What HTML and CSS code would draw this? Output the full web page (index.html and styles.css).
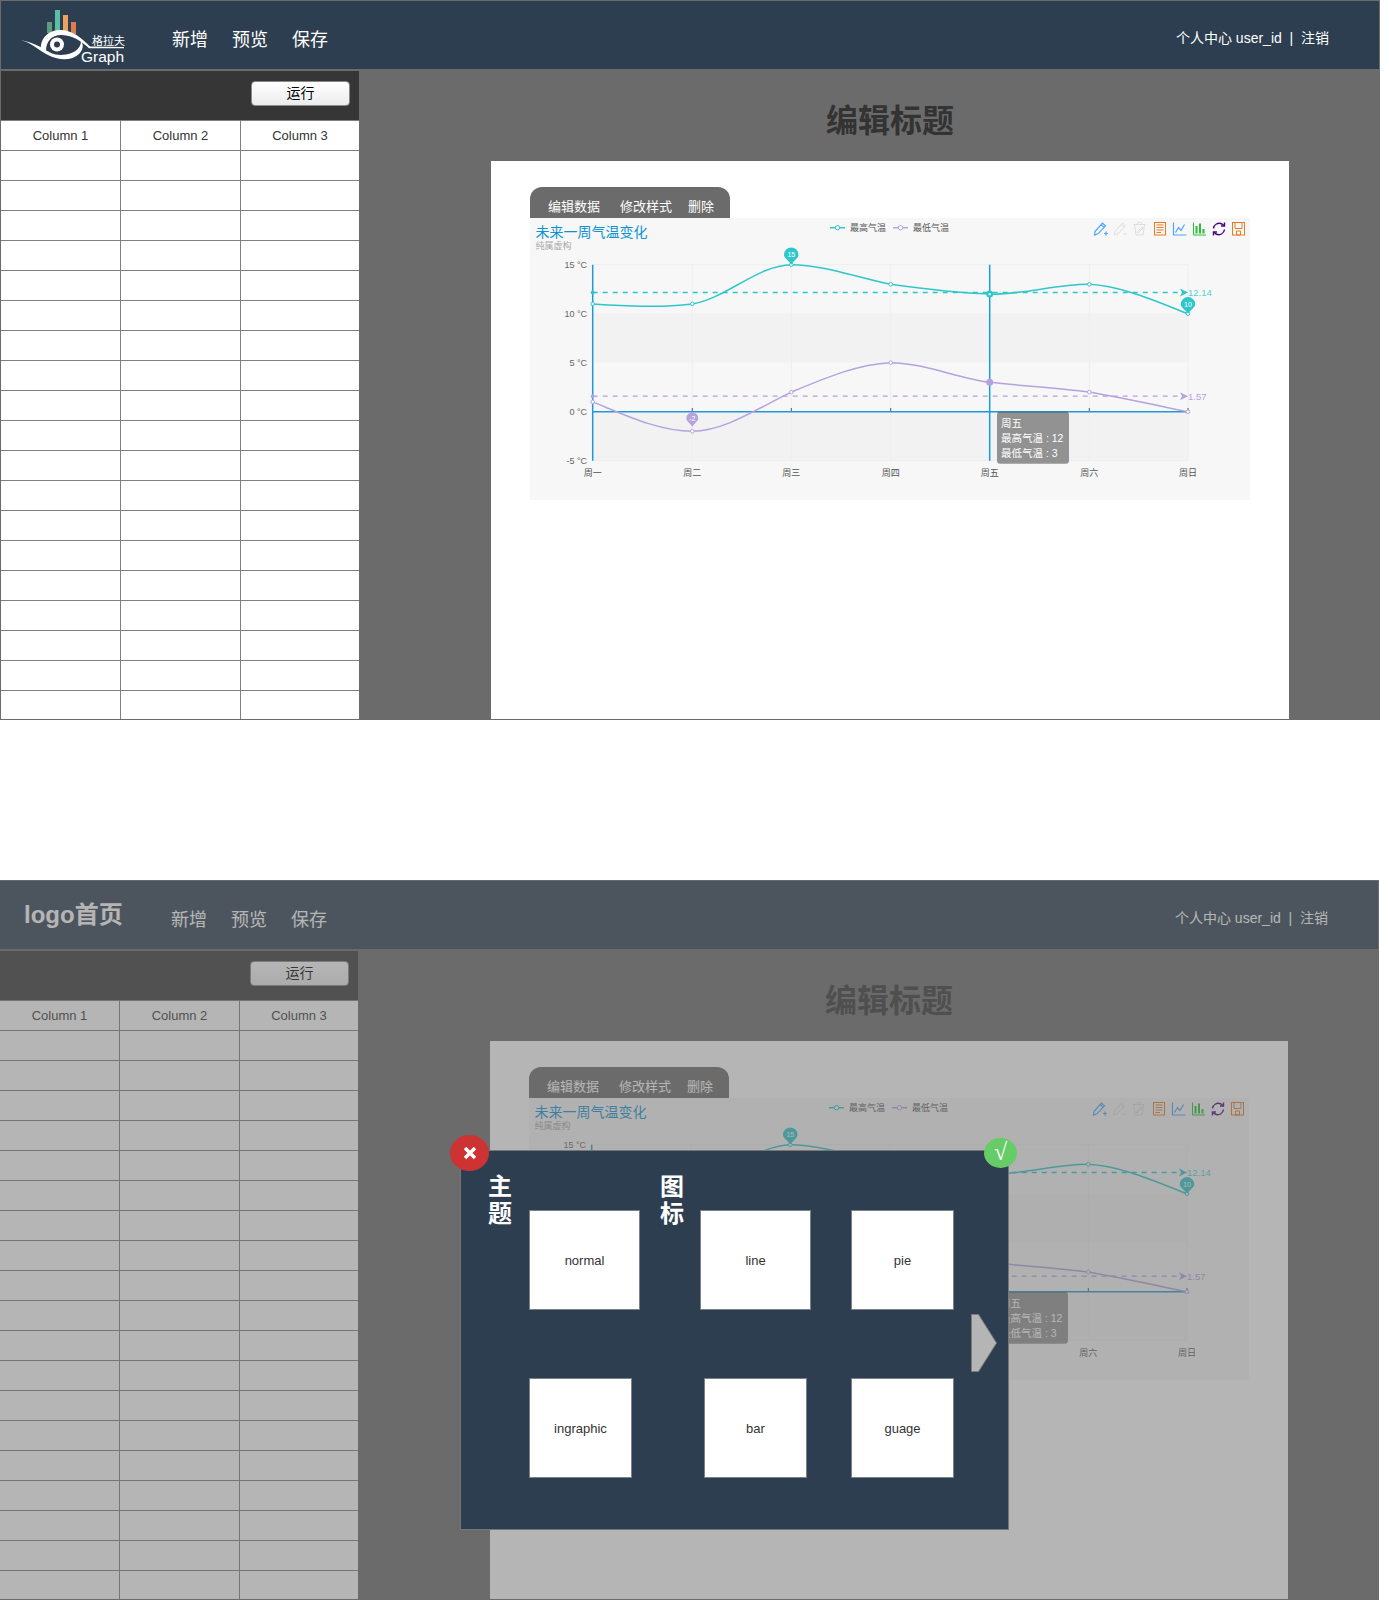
FILE: index.html
```html
<!DOCTYPE html>
<html lang="zh-CN">
<head>
  <meta charset="UTF-8">
  <meta name="viewport" content="width=device-width, initial-scale=1.0">
  <title>格拉夫 Graph</title>
  <link rel="stylesheet" href="styles.css">
</head>
<body>
  <!-- 编辑页 -->
  <section class="frame">
    <header class="nav">
      <div class="logo">
        <svg class="logo-img" viewBox="1 1 130 68">
          <rect class="bar-a" x="47" y="22" width="5" height="11"/>
          <rect class="bar-b" x="55" y="10" width="5" height="20"/>
          <rect class="bar-c" x="63" y="15" width="5" height="17"/>
          <rect class="bar-d" x="71" y="22" width="5" height="12"/>
          <path class="eye-fill" d="M21,40.5C30,41.5 38,50 48,55C58,60.5 72,61 79,54C83,50 84,45 81,41C81,47 76,53 66,54.5C56,56 50,53 44,49C36,44.5 28,41 21,40.5Z"/>
          <path class="eye-fill" d="M41,49C40,38 49,30 60,30C73,30 81,38 90,46.5L124,47L124,48.2L89,48.2C81,41 73,35.5 62,35C52,34.5 46,41 46,51Z"/>
          <circle class="eye-fill" cx="57" cy="44.5" r="7"/>
          <circle class="eye-dot" cx="57" cy="44.5" r="3"/>
          <text class="logo-cn" x="92" y="45">格拉夫</text>
          <text class="logo-en" x="81" y="62">Graph</text>
        </svg>
      </div>
      <nav class="nav-links">
        <a>新增</a>
        <a>预览</a>
        <a>保存</a>
      </nav>
      <div class="nav-user">个人中心 user_id &nbsp;|&nbsp; 注销</div>
    </header>
    <div class="layout">
      <aside class="side">
        <div class="side-bar"><button class="run-btn">运行</button></div>
        <table class="sheet">
          <tr><th>Column 1</th><th>Column 2</th><th>Column 3</th></tr>
          <tr><td></td><td></td><td></td></tr>
          <tr><td></td><td></td><td></td></tr>
          <tr><td></td><td></td><td></td></tr>
          <tr><td></td><td></td><td></td></tr>
          <tr><td></td><td></td><td></td></tr>
          <tr><td></td><td></td><td></td></tr>
          <tr><td></td><td></td><td></td></tr>
          <tr><td></td><td></td><td></td></tr>
          <tr><td></td><td></td><td></td></tr>
          <tr><td></td><td></td><td></td></tr>
          <tr><td></td><td></td><td></td></tr>
          <tr><td></td><td></td><td></td></tr>
          <tr><td></td><td></td><td></td></tr>
          <tr><td></td><td></td><td></td></tr>
          <tr><td></td><td></td><td></td></tr>
          <tr><td></td><td></td><td></td></tr>
          <tr><td></td><td></td><td></td></tr>
          <tr><td></td><td></td><td></td></tr>
          <tr><td></td><td></td><td></td></tr>
        </table>
      </aside>
      <main class="main">
        <h1 class="page-title">编辑标题</h1>
        <div class="card">
          <div class="tabs">
            <span class="tab">编辑数据</span>
            <span class="tab">修改样式</span>
            <span class="tab tab-last">删除</span>
          </div>
          <svg class="chart" viewBox="0 0 720 282">
            <rect class="band" x="62.7" y="95.3" width="595.3" height="49"/>
            <rect class="band" x="62.7" y="193.7" width="595.3" height="49"/>
            <path class="grid" d="M62.7,46.7H658M162.3,46.7V242.7M261.3,46.7V242.7M360.7,46.7V242.7M559.3,46.7V242.7M658,46.7V242.7M62.7,242.7H658"/>
            <text class="chart-title" x="5.5" y="18.5">未来一周气温变化</text>
            <text class="chart-sub" x="5.5" y="31">纯属虚构</text>
            <path class="line-high" d="M300,9.7h15"/><circle class="dot-high" cx="307.5" cy="9.7" r="2.2"/>
            <text class="legend" x="320" y="13">最高气温</text>
            <path class="line-low" d="M363,9.7h15"/><circle class="dot-low" cx="370.5" cy="9.7" r="2.2"/>
            <text class="legend" x="383" y="13">最低气温</text>
            <g class="ylabels">
              <text x="57" y="50">15 °C</text>
              <text x="57" y="99">10 °C</text>
              <text x="57" y="148">5 °C</text>
              <text x="57" y="197">0 °C</text>
              <text x="57" y="246">-5 °C</text>
            </g>
            <g class="xlabels">
              <text x="62.7" y="258">周一</text>
              <text x="162.3" y="258">周二</text>
              <text x="261.3" y="258">周三</text>
              <text x="360.7" y="258">周四</text>
              <text x="459.7" y="258">周五</text>
              <text x="559.3" y="258">周六</text>
              <text x="658" y="258">周日</text>
            </g>
            <path class="axis" d="M62.7,46.7V242.7M62.7,193.7H658M459.7,46.7V242.7"/>
            <path class="tick" d="M162.3,190V193M261.3,190V193M360.7,190V193M559.3,190V193M658,190V193"/>
            <path class="dash-high" d="M62.7,74.5H652"/>
            <path class="arrow-high" d="M650,70.5L658,74.5L650,78.5L652,74.5Z"/>
            <circle class="fill-high" cx="62.7" cy="74.5" r="2"/>
            <text class="mark-high" x="658" y="78">12.14</text>
            <path class="dash-low" d="M62.7,178.2H652"/>
            <path class="arrow-low" d="M650,174.2L658,178.2L650,182.2L652,178.2Z"/>
            <circle class="fill-low" cx="62.7" cy="178.2" r="2"/>
            <text class="mark-low" x="658" y="182">1.57</text>
            <path class="line-high" d="M62.7,85.9C95,88 130,90 162.3,85.9C195,81 228,47 261.3,46.7C295,47 328,60 360.7,66.3C394,71 427,75 459.7,76.1C493,77 526,66 559.3,66.3C592,68 625,83 658,95.7"/>
            <path class="line-low" d="M62.7,183.9C95,197 128,213 162.3,213.3C195,213 228,190 261.3,174.1C295,160 328,146 360.7,144.7C394,145 427,160 459.7,164.3C493,168 526,170 559.3,174.1C592,180 625,187 658,193.7"/>
            <g class="dots-high">
              <circle cx="62.7" cy="85.9" r="1.8"/><circle cx="162.3" cy="85.9" r="1.8"/><circle cx="261.3" cy="46.7" r="1.8"/><circle cx="360.7" cy="66.3" r="1.8"/><circle cx="559.3" cy="66.3" r="1.8"/><circle cx="658" cy="95.7" r="1.8"/>
            </g>
            <g class="dots-low">
              <circle cx="62.7" cy="183.9" r="1.8"/><circle cx="162.3" cy="213.3" r="1.8"/><circle cx="261.3" cy="174.1" r="1.8"/><circle cx="360.7" cy="144.7" r="1.8"/><circle cx="559.3" cy="174.1" r="1.8"/><circle cx="658" cy="193.7" r="1.8"/>
            </g>
            <circle class="fill-high" cx="459.7" cy="76.1" r="3.5"/><circle class="hole" cx="459.7" cy="76.1" r="1.2"/>
            <circle class="fill-low" cx="459.7" cy="164.3" r="3.5"/>
            <path class="fill-high" d="M254,36.7A7.2,7.2 0 1 1 268.5,36.7C268.5,40 264,42 261.3,46.7C258.5,42 254,40 254,36.7Z"/>
            <text class="pin-text" x="261.3" y="39">15</text>
            <path class="fill-high" d="M650.8,86.3A7.2,7.2 0 1 1 665.2,86.3C665.2,89.6 660.7,91.6 658,95.7C655.3,91.6 650.8,89.6 650.8,86.3Z"/>
            <text class="pin-text" x="658" y="88.6">10</text>
            <path class="fill-low" d="M156.3,200.3A6,6 0 1 1 168.3,200.3C168.3,203 164.5,205 162.3,209C160,205 156.3,203 156.3,200.3Z"/>
            <text class="pin-text" x="162.3" y="202.6">-2</text>
            <g class="tooltip">
              <rect class="tip-bg" x="467" y="193.7" width="72" height="52" rx="3"/>
              <text x="471" y="209">周五</text>
              <text x="471" y="224">最高气温 : 12</text>
              <text x="471" y="239">最低气温 : 3</text>
            </g>
            <g class="tool-blue" transform="translate(564,4)">
              <path d="M1,9.5L8.5,1.2L11.5,3.8L4,11.8L0.5,13ZM7.2,2.8L10.2,5.4"/><path d="M10,11.5h4M12,9.5v4"/>
            </g>
            <g class="tool-off" transform="translate(584,4)">
              <path d="M1,9.5L8.5,1.2L11.5,3.8L4,11.8L0.5,13ZM7.2,2.8L10.2,5.4"/><path d="M9,12h4"/>
            </g>
            <g class="tool-off" transform="translate(603,4)">
              <path d="M0.5,2.5H12.5M4,2.5L5,0.5H8L9,2.5M1.5,2.5L3,13H10L11.5,2.5M4,10L9,5L10,6L5,11Z"/>
            </g>
            <g class="tool-orange" transform="translate(624,4)">
              <rect x="0.5" y="0.5" width="11" height="12.5"/><path d="M2.5,3H9.5M2.5,5.5H9.5M2.5,8H9.5M2.5,10.5H7"/>
            </g>
            <g class="tool-blue" transform="translate(643,4)">
              <path d="M0.5,0.5V13H13.5M2.5,10.5L5.5,5.5L8,8.5L11.5,2.5"/>
            </g>
            <g class="tool-green" transform="translate(663,4)">
              <path d="M0.5,0.5V13H13"/><path class="solid-green" d="M2.5,4h2v7.5h-2ZM6,1.5h2v10h-2ZM9.5,7h2v4.5h-2Z"/>
            </g>
            <g class="tool-purple" transform="translate(682,4)">
              <path d="M1.5,6.5C2,2.5 6,0 10,2L12,3.5M12.5,7.5C12,11.5 8,14 4,12L2,10.5"/><path d="M12.5,0.5V4H9M1.5,13.5V10H5"/>
            </g>
            <g class="tool-orange" transform="translate(702,4)">
              <rect x="0.5" y="0.5" width="12" height="12.5"/><path d="M3,0.5V6.5H10V0.5M4.5,9H8.5V13H4.5Z"/>
            </g>
          </svg>
        </div>
      </main>
    </div>
  </section>

  <!-- 选择图表弹窗 -->
  <section class="frame frame-modal">
    <header class="nav">
      <div class="logo"><span class="logo-text">logo首页</span></div>
      <nav class="nav-links">
        <a>新增</a>
        <a>预览</a>
        <a>保存</a>
      </nav>
      <div class="nav-user">个人中心 user_id &nbsp;|&nbsp; 注销</div>
    </header>
    <div class="layout">
      <aside class="side">
        <div class="side-bar"><button class="run-btn">运行</button></div>
        <table class="sheet">
          <tr><th>Column 1</th><th>Column 2</th><th>Column 3</th></tr>
          <tr><td></td><td></td><td></td></tr>
          <tr><td></td><td></td><td></td></tr>
          <tr><td></td><td></td><td></td></tr>
          <tr><td></td><td></td><td></td></tr>
          <tr><td></td><td></td><td></td></tr>
          <tr><td></td><td></td><td></td></tr>
          <tr><td></td><td></td><td></td></tr>
          <tr><td></td><td></td><td></td></tr>
          <tr><td></td><td></td><td></td></tr>
          <tr><td></td><td></td><td></td></tr>
          <tr><td></td><td></td><td></td></tr>
          <tr><td></td><td></td><td></td></tr>
          <tr><td></td><td></td><td></td></tr>
          <tr><td></td><td></td><td></td></tr>
          <tr><td></td><td></td><td></td></tr>
          <tr><td></td><td></td><td></td></tr>
          <tr><td></td><td></td><td></td></tr>
          <tr><td></td><td></td><td></td></tr>
          <tr><td></td><td></td><td></td></tr>
        </table>
      </aside>
      <main class="main">
        <h1 class="page-title">编辑标题</h1>
        <div class="card">
          <div class="tabs">
            <span class="tab">编辑数据</span>
            <span class="tab">修改样式</span>
            <span class="tab tab-last">删除</span>
          </div>
          <svg class="chart" viewBox="0 0 720 282">
            <rect class="band" x="62.7" y="95.3" width="595.3" height="49"/>
            <rect class="band" x="62.7" y="193.7" width="595.3" height="49"/>
            <path class="grid" d="M62.7,46.7H658M162.3,46.7V242.7M261.3,46.7V242.7M360.7,46.7V242.7M559.3,46.7V242.7M658,46.7V242.7M62.7,242.7H658"/>
            <text class="chart-title" x="5.5" y="18.5">未来一周气温变化</text>
            <text class="chart-sub" x="5.5" y="31">纯属虚构</text>
            <path class="line-high" d="M300,9.7h15"/><circle class="dot-high" cx="307.5" cy="9.7" r="2.2"/>
            <text class="legend" x="320" y="13">最高气温</text>
            <path class="line-low" d="M363,9.7h15"/><circle class="dot-low" cx="370.5" cy="9.7" r="2.2"/>
            <text class="legend" x="383" y="13">最低气温</text>
            <g class="ylabels">
              <text x="57" y="50">15 °C</text>
              <text x="57" y="99">10 °C</text>
              <text x="57" y="148">5 °C</text>
              <text x="57" y="197">0 °C</text>
              <text x="57" y="246">-5 °C</text>
            </g>
            <g class="xlabels">
              <text x="62.7" y="258">周一</text>
              <text x="162.3" y="258">周二</text>
              <text x="261.3" y="258">周三</text>
              <text x="360.7" y="258">周四</text>
              <text x="459.7" y="258">周五</text>
              <text x="559.3" y="258">周六</text>
              <text x="658" y="258">周日</text>
            </g>
            <path class="axis" d="M62.7,46.7V242.7M62.7,193.7H658M459.7,46.7V242.7"/>
            <path class="tick" d="M162.3,190V193M261.3,190V193M360.7,190V193M559.3,190V193M658,190V193"/>
            <path class="dash-high" d="M62.7,74.5H652"/>
            <path class="arrow-high" d="M650,70.5L658,74.5L650,78.5L652,74.5Z"/>
            <circle class="fill-high" cx="62.7" cy="74.5" r="2"/>
            <text class="mark-high" x="658" y="78">12.14</text>
            <path class="dash-low" d="M62.7,178.2H652"/>
            <path class="arrow-low" d="M650,174.2L658,178.2L650,182.2L652,178.2Z"/>
            <circle class="fill-low" cx="62.7" cy="178.2" r="2"/>
            <text class="mark-low" x="658" y="182">1.57</text>
            <path class="line-high" d="M62.7,85.9C95,88 130,90 162.3,85.9C195,81 228,47 261.3,46.7C295,47 328,60 360.7,66.3C394,71 427,75 459.7,76.1C493,77 526,66 559.3,66.3C592,68 625,83 658,95.7"/>
            <path class="line-low" d="M62.7,183.9C95,197 128,213 162.3,213.3C195,213 228,190 261.3,174.1C295,160 328,146 360.7,144.7C394,145 427,160 459.7,164.3C493,168 526,170 559.3,174.1C592,180 625,187 658,193.7"/>
            <g class="dots-high">
              <circle cx="62.7" cy="85.9" r="1.8"/><circle cx="162.3" cy="85.9" r="1.8"/><circle cx="261.3" cy="46.7" r="1.8"/><circle cx="360.7" cy="66.3" r="1.8"/><circle cx="559.3" cy="66.3" r="1.8"/><circle cx="658" cy="95.7" r="1.8"/>
            </g>
            <g class="dots-low">
              <circle cx="62.7" cy="183.9" r="1.8"/><circle cx="162.3" cy="213.3" r="1.8"/><circle cx="261.3" cy="174.1" r="1.8"/><circle cx="360.7" cy="144.7" r="1.8"/><circle cx="559.3" cy="174.1" r="1.8"/><circle cx="658" cy="193.7" r="1.8"/>
            </g>
            <circle class="fill-high" cx="459.7" cy="76.1" r="3.5"/><circle class="hole" cx="459.7" cy="76.1" r="1.2"/>
            <circle class="fill-low" cx="459.7" cy="164.3" r="3.5"/>
            <path class="fill-high" d="M254,36.7A7.2,7.2 0 1 1 268.5,36.7C268.5,40 264,42 261.3,46.7C258.5,42 254,40 254,36.7Z"/>
            <text class="pin-text" x="261.3" y="39">15</text>
            <path class="fill-high" d="M650.8,86.3A7.2,7.2 0 1 1 665.2,86.3C665.2,89.6 660.7,91.6 658,95.7C655.3,91.6 650.8,89.6 650.8,86.3Z"/>
            <text class="pin-text" x="658" y="88.6">10</text>
            <path class="fill-low" d="M156.3,200.3A6,6 0 1 1 168.3,200.3C168.3,203 164.5,205 162.3,209C160,205 156.3,203 156.3,200.3Z"/>
            <text class="pin-text" x="162.3" y="202.6">-2</text>
            <g class="tooltip">
              <rect class="tip-bg" x="467" y="193.7" width="72" height="52" rx="3"/>
              <text x="471" y="209">周五</text>
              <text x="471" y="224">最高气温 : 12</text>
              <text x="471" y="239">最低气温 : 3</text>
            </g>
            <g class="tool-blue" transform="translate(564,4)">
              <path d="M1,9.5L8.5,1.2L11.5,3.8L4,11.8L0.5,13ZM7.2,2.8L10.2,5.4"/><path d="M10,11.5h4M12,9.5v4"/>
            </g>
            <g class="tool-off" transform="translate(584,4)">
              <path d="M1,9.5L8.5,1.2L11.5,3.8L4,11.8L0.5,13ZM7.2,2.8L10.2,5.4"/><path d="M9,12h4"/>
            </g>
            <g class="tool-off" transform="translate(603,4)">
              <path d="M0.5,2.5H12.5M4,2.5L5,0.5H8L9,2.5M1.5,2.5L3,13H10L11.5,2.5M4,10L9,5L10,6L5,11Z"/>
            </g>
            <g class="tool-orange" transform="translate(624,4)">
              <rect x="0.5" y="0.5" width="11" height="12.5"/><path d="M2.5,3H9.5M2.5,5.5H9.5M2.5,8H9.5M2.5,10.5H7"/>
            </g>
            <g class="tool-blue" transform="translate(643,4)">
              <path d="M0.5,0.5V13H13.5M2.5,10.5L5.5,5.5L8,8.5L11.5,2.5"/>
            </g>
            <g class="tool-green" transform="translate(663,4)">
              <path d="M0.5,0.5V13H13"/><path class="solid-green" d="M2.5,4h2v7.5h-2ZM6,1.5h2v10h-2ZM9.5,7h2v4.5h-2Z"/>
            </g>
            <g class="tool-purple" transform="translate(682,4)">
              <path d="M1.5,6.5C2,2.5 6,0 10,2L12,3.5M12.5,7.5C12,11.5 8,14 4,12L2,10.5"/><path d="M12.5,0.5V4H9M1.5,13.5V10H5"/>
            </g>
            <g class="tool-orange" transform="translate(702,4)">
              <rect x="0.5" y="0.5" width="12" height="12.5"/><path d="M3,0.5V6.5H10V0.5M4.5,9H8.5V13H4.5Z"/>
            </g>
          </svg>
        </div>
      </main>
    </div>
    <div class="overlay"></div>
    <div class="modal">
      <div class="close-btn">
        <svg class="close-icon" viewBox="0 0 14 14"><path d="M2,2L12,12M12,2L2,12"/></svg>
      </div>
      <div class="ok-btn">√</div>
      <div class="modal-row">
        <div class="modal-label label-theme">主题</div>
        <div class="pick pick-wide pick-first">normal</div>
        <div class="modal-label label-icon">图标</div>
        <div class="pick pick-wide pick-line">line</div>
        <div class="pick pick-pie">pie</div>
      </div>
      <div class="modal-row modal-row-two">
        <div class="pick">ingraphic</div>
        <div class="pick pick-bar">bar</div>
        <div class="pick pick-guage">guage</div>
      </div>
      <svg class="next-arrow" viewBox="0 0 26 58"><path d="M0.5,0.5H7.5L25.5,29L7.5,57.5H0.5Z"/></svg>
    </div>
  </section>
</body>
</html>
```

FILE: styles.css
```css
* {
  box-sizing: border-box;
}

body {
  margin: 0;
  background: #fff;
  font-family: "Liberation Sans", "Noto Sans CJK SC", sans-serif;
}

.frame {
  position: relative;
  width: 1380px;
  height: 720px;
  border: 1px solid #6b6b6b;
  background: #6b6b6b;
  overflow: hidden;
}

.frame-modal {
  margin: 160px 0 9px -1px;
}

/* 顶部导航 */
.nav {
  display: flex;
  align-items: center;
  height: 68px;
  margin-bottom: 2px;
  background: #2d3e50;
  color: #fff;
}

.logo {
  width: 130px;
  height: 68px;
  display: flex;
  align-items: center;
}

.logo-img {
  width: 130px;
  height: 68px;
  display: block;
}

.logo-text {
  padding: 0 0 6px 24px;
  font-size: 24px;
  font-weight: bold;
  white-space: nowrap;
}

.bar-a { fill: #5f9a7e; }
.bar-b { fill: #5bbfa5; }
.bar-c { fill: #e8a45c; }
.bar-d { fill: #dd7d4b; }
.eye-fill { fill: #fff; }
.eye-dot { fill: #2d3e50; }

.logo-cn {
  fill: #fff;
  font-size: 11px;
}

.logo-en {
  fill: #fff;
  font-size: 15.5px;
}

.nav-links {
  display: flex;
  gap: 24px;
  margin-left: 41px;
  padding-top: 5px;
  font-size: 18px;
}

.nav-user {
  margin-left: auto;
  padding: 4px 50px 0 0;
  font-size: 14px;
  white-space: nowrap;
}

.layout {
  display: flex;
  height: 648px;
}

/* 左侧数据表 */
.side {
  width: 358px;
  flex-shrink: 0;
  background: #fff;
  overflow: hidden;
}

.side-bar {
  display: flex;
  justify-content: flex-end;
  align-items: center;
  height: 49px;
  padding: 0 9px 5px 0;
  background: #363636;
}

.run-btn {
  width: 99px;
  height: 25px;
  padding: 0 0 2px;
  border: 1px solid #8a8a8a;
  border-radius: 4px;
  background: linear-gradient(#fff, #ececec);
  color: #000;
  font-family: inherit;
  font-size: 14px;
}

.sheet {
  width: 358px;
  table-layout: fixed;
  border-collapse: separate;
  border-spacing: 0;
}

.sheet th,
.sheet td {
  height: 30px;
  padding: 0;
  border-top: 1px solid #7f7f7f;
  border-right: 1px solid #7f7f7f;
  color: #333;
  font-size: 13px;
  font-weight: normal;
}

.sheet th:first-child,
.sheet td:first-child {
  width: 120px;
}

.sheet th:nth-child(2),
.sheet td:nth-child(2) {
  width: 120px;
}

.sheet th:last-child,
.sheet td:last-child {
  border-right: 0;
}

/* 右侧编辑区 */
.main {
  flex: 1;
  padding: 19px 90px 0 132px;
}

.page-title {
  margin: 0 0 11px;
  height: 60px;
  color: #333;
  font-size: 32px;
  font-weight: bold;
  line-height: 62px;
  text-align: center;
}

.card {
  height: 600px;
  padding: 26px 39px 0;
  background: #fff;
}

.tabs {
  display: flex;
  align-items: center;
  width: 200px;
  height: 31px;
  padding: 5px 0 0 18px;
  border-radius: 12px 12px 0 0;
  background: #6b6b6b;
  color: #fff;
  font-size: 13px;
}

.tab {
  margin-right: 20px;
  white-space: nowrap;
}

.tab-last {
  margin: 0 0 0 -4px;
}

/* 图表 */
.chart {
  display: block;
  width: 720px;
  height: 282px;
  background: #f7f7f7;
}

.band { fill: #f2f2f2; }
.grid { fill: none; stroke: #eee; stroke-width: 1; }
.chart-title { fill: #0d93d2; font-size: 14px; }
.chart-sub { fill: #aaa; font-size: 9px; }
.legend { fill: #555; font-size: 9px; }
.ylabels text { fill: #666; font-size: 9px; text-anchor: end; }
.xlabels text { fill: #555; font-size: 9px; text-anchor: middle; }
.axis { fill: none; stroke: #1e9ad6; stroke-width: 1.5; }
.tick { fill: none; stroke: #555; stroke-width: 1; }
.line-high { fill: none; stroke: #2ec7c9; stroke-width: 1.5; }
.line-low { fill: none; stroke: #b6a2de; stroke-width: 1.5; }
.dash-high { fill: none; stroke: #2ec7c9; stroke-width: 1.3; stroke-dasharray: 5 5; }
.dash-low { fill: none; stroke: #b6a2de; stroke-width: 1.3; stroke-dasharray: 5 5; }
.arrow-high, .fill-high { fill: #2ec7c9; }
.arrow-low, .fill-low { fill: #b6a2de; }
.mark-high { fill: #2ec7c9; font-size: 9.5px; opacity: .8; }
.mark-low { fill: #b6a2de; font-size: 9.5px; }
.dot-high, .dots-high circle { fill: #fff; stroke: #2ec7c9; stroke-width: 1; }
.dot-low, .dots-low circle { fill: #fff; stroke: #b6a2de; stroke-width: 1; }
.hole { fill: #fff; }
.pin-text { fill: #fff; font-size: 7px; text-anchor: middle; }
.tip-bg { fill: #323232; fill-opacity: .5; }
.tooltip text { fill: #fff; font-size: 10.5px; }

.tool-blue path, .tool-off path, .tool-orange path, .tool-orange rect, .tool-green path, .tool-purple path {
  fill: none;
  stroke-width: 1;
}

.tool-blue path { stroke: #4da6ff; stroke-width: 1.2; }
.tool-off path { stroke: #ddd; }
.tool-orange path, .tool-orange rect { stroke: #e87c25; }
.tool-green path { stroke: #26c034; }
.tool-green .solid-green { fill: #26c034; stroke: none; }
.tool-purple path { stroke: #4b0082; stroke-width: 1.4; }

/* 弹窗遮罩 */
.overlay {
  position: absolute;
  inset: -1px;
  background: rgba(107, 107, 107, .5);
}

.modal {
  position: absolute;
  left: 460px;
  top: 269px;
  width: 549px;
  height: 380px;
  padding-top: 22px;
  border: 1px solid #777;
  background: #2d3e50;
}

.close-btn {
  position: absolute;
  left: -11px;
  top: -16px;
  display: flex;
  align-items: center;
  justify-content: center;
  width: 39px;
  height: 36px;
  border-radius: 50%;
  background: #cd3333;
}

.close-icon {
  width: 14px;
  height: 14px;
}

.close-icon path {
  fill: none;
  stroke: #fff;
  stroke-width: 3.4;
}

.ok-btn {
  position: absolute;
  left: 523px;
  top: -13px;
  width: 33px;
  height: 30px;
  border-radius: 50%;
  background: #66cc66;
  color: #fff;
  font-family: "Liberation Serif", serif;
  font-size: 24px;
  line-height: 28px;
  text-align: center;
}

.modal-row {
  display: flex;
  align-items: flex-start;
}

.modal-row-two {
  margin-top: 68px;
  padding-left: 68px;
}

.modal-label {
  width: 24px;
  color: #fff;
  font-size: 24px;
  font-weight: bold;
  line-height: 27px;
}

.label-theme { margin-left: 27px; }
.label-icon { margin-left: 20px; }

.pick {
  display: flex;
  align-items: center;
  justify-content: center;
  width: 103px;
  height: 100px;
  border: 1px solid #7a8087;
  background: #fff;
  color: #333;
  font-size: 13px;
}

.pick-wide { width: 111px; }
.pick-first { margin: 37px 0 0 17px; }
.pick-line { margin: 37px 0 0 16px; }
.pick-pie { margin: 37px 0 0 40px; }
.pick-bar { margin-left: 72px; }
.pick-guage { margin-left: 44px; }

.next-arrow {
  position: absolute;
  left: 510px;
  top: 163px;
  width: 26px;
  height: 58px;
}

.next-arrow path {
  fill: #b5b5b5;
  stroke: #7d7d7d;
  stroke-width: 1;
}
```
